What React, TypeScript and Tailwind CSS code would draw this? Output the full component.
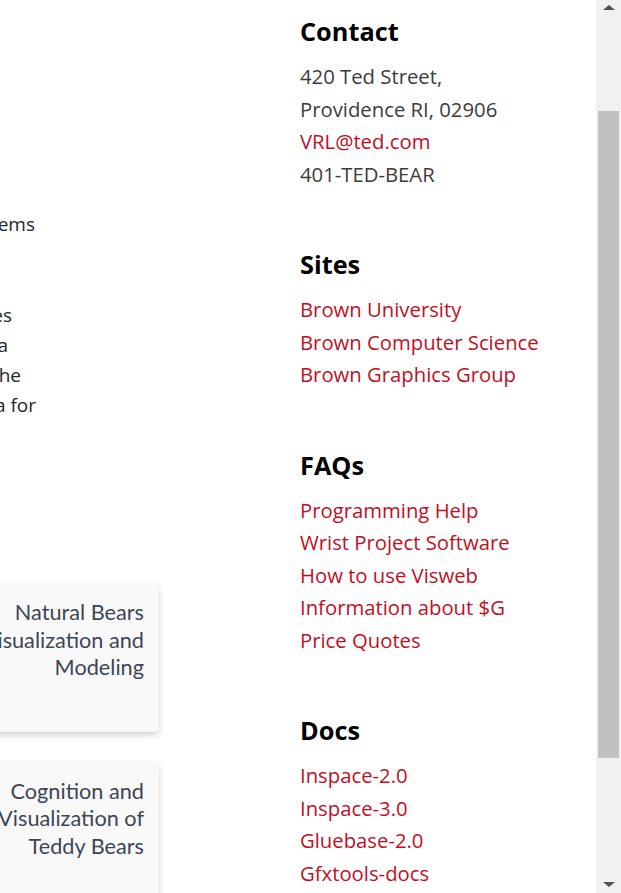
import React from "react";

const leftLines: { text: string; w: string }[] = [
  { text: "interactive visualization systems", w: "w-[35px]" },
];

const paraLines: { text: string; w: string }[] = [
  { text: "new visual representations, techniques", w: "w-[12px]" },
  { text: "and tools for exploring scientific data", w: "w-[8px]" },
  { text: "so that researchers can understand the", w: "w-[21px]" },
  { text: "structures in their data for", w: "w-[36px]" },
];

function Card({ lines, className }: { lines: string[]; className?: string }) {
  return (
    <div className={"flex w-[159px] justify-end " + (className ?? "")}>
      <div className="w-[320px] shrink-0 rounded-[5px] bg-[#f9f9f9] pt-[16px] pb-[50px] pr-[15px] text-right text-[21.7px] leading-[27.5px] text-[#3d4654] shadow-[0_3px_6px_rgba(0,0,0,0.18)] [font-family:Lato,'Noto_Sans',sans-serif]">
        {lines.map((l) => (
          <div key={l}>{l}</div>
        ))}
      </div>
    </div>
  );
}

function Section({
  title,
  items,
}: {
  title: string;
  items: { text: string; link?: boolean }[];
}) {
  return (
    <section>
      <h2 className="text-[25.3px] font-bold leading-[32px] text-black">{title}</h2>
      <ul className="mt-[13px]">
        {items.map((it) => (
          <li
            key={it.text}
            className={
              "text-[20.3px] leading-[32.5px] " +
              (it.link ? "text-[#c20f1f]" : "text-[#3c3c3c]")
            }
          >
            {it.link ? <a href="#">{it.text}</a> : it.text}
          </li>
        ))}
      </ul>
    </section>
  );
}

export default function App() {
  return (
    <div className="flex h-[893px] w-[621px] overflow-hidden bg-white [font-family:'Open_Sans','Noto_Sans',sans-serif]">
      <div className="flex flex-1">
        {/* left (cut-off) column */}
        <div className="flex w-[300px] shrink-0 flex-col overflow-hidden">
          <div className="pt-[209px] text-[19px] leading-[30px] text-[#212529]">
            {leftLines.map((l) => (
              <div key={l.text} className={"flex justify-end whitespace-nowrap " + l.w}>
                <span className="shrink-0">{l.text}</span>
              </div>
            ))}
            <div className="mt-[61px]">
              {paraLines.map((l) => (
                <div key={l.text} className={"flex justify-end whitespace-nowrap " + l.w}>
                  <span className="shrink-0">{l.text}</span>
                </div>
              ))}
            </div>
          </div>
          <Card className="mt-[163px]" lines={["Natural Bears", "Visualization and", "Modeling"]} />
          <Card className="mt-[30px]" lines={["Cognition and", "Visualization of", "Teddy Bears"]} />
        </div>

        {/* right column */}
        <div className="flex flex-col gap-[58px] pt-[15px]">
          <Section
            title="Contact"
            items={[
              { text: "420 Ted Street," },
              { text: "Providence RI, 02906" },
              { text: "VRL@ted.com", link: true },
              { text: "401-TED-BEAR" },
            ]}
          />
          <Section
            title="Sites"
            items={[
              { text: "Brown University", link: true },
              { text: "Brown Computer Science", link: true },
              { text: "Brown Graphics Group", link: true },
            ]}
          />
          <Section
            title="FAQs"
            items={[
              { text: "Programming Help", link: true },
              { text: "Wrist Project Software", link: true },
              { text: "How to use Visweb", link: true },
              { text: "Information about $G", link: true },
              { text: "Price Quotes", link: true },
            ]}
          />
          <Section
            title="Docs"
            items={[
              { text: "Inspace-2.0", link: true },
              { text: "Inspace-3.0", link: true },
              { text: "Gluebase-2.0", link: true },
              { text: "Gfxtools-docs", link: true },
            ]}
          />
        </div>
      </div>

      {/* scrollbar */}
      <div className="flex w-[25px] shrink-0 flex-col items-center bg-[#f1f1f1]">
        <div className="mt-[5px] h-0 w-0 border-x-[6px] border-b-[5px] border-x-transparent border-b-[#505050]" />
        <div className="mt-[101px] h-[647px] w-[21px] bg-[#c1c1c1]" />
        <div className="mt-auto mb-[6px] h-0 w-0 border-x-[6px] border-t-[5px] border-x-transparent border-t-[#505050]" />
      </div>
    </div>
  );
}
